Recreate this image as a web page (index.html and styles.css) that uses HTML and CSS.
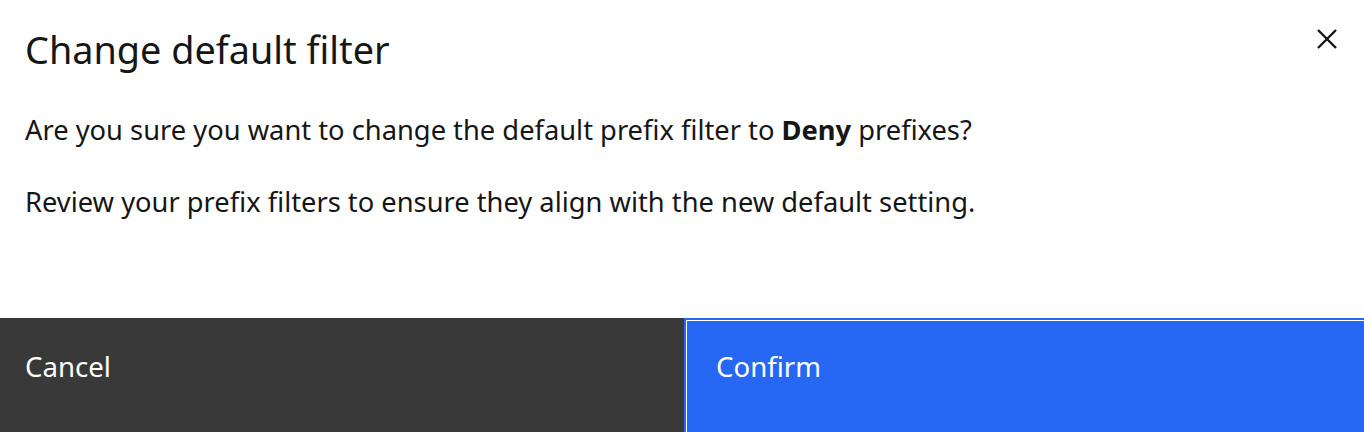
FILE: index.html
```html
<!DOCTYPE html>
<html lang="en">
<head>
    <meta charset="UTF-8">
    <meta name="viewport" content="width=device-width, initial-scale=1.0">
    <title>Change default filter</title>
    <link rel="stylesheet" href="styles.css">
</head>
<body>
    <div class="modal">
        <div class="modal-header">
            <h2 class="modal-title">Change default filter</h2>
            <button class="modal-close" aria-label="Close">
                <svg width="40" height="40" viewBox="0 0 40 40">
                    <path d="M11 11 L29 29 M29 11 L11 29" stroke="#161616" stroke-width="2.4" fill="none"/>
                </svg>
            </button>
        </div>

        <div class="modal-content">
            <p>Are you sure you want to change the default prefix filter to <strong>Deny</strong> prefixes?</p>
            <p>Review your prefix filters to ensure they align with the new default setting.</p>
        </div>

        <div class="modal-footer">
            <button class="btn btn-secondary">Cancel</button>
            <button class="btn btn-primary">Confirm</button>
        </div>
    </div>
</body>
</html>
```

FILE: styles.css
```css
body {
    margin: 0;
    font-family: "Noto Sans", sans-serif;
    color: #161616;
    background: #fff;
    overflow: hidden;
}

.modal {
    height: 432px;
    display: flex;
    flex-direction: column;
}

.modal-header {
    display: flex;
    justify-content: space-between;
    align-items: flex-start;
    padding: 26px 17px 0 25px;
    height: 48px;
}

.modal-title {
    margin: 0;
    font-size: 37.8px;
    font-weight: 400;
    line-height: 48px;
}

.modal-close {
    background: none;
    border: none;
    padding: 0;
    width: 40px;
    height: 40px;
    margin-top: -7px;
}

.modal-content {
    padding: 0 25px;
    margin-top: 38px;
}

.modal-content p {
    margin: 0 0 36px;
    font-size: 27.3px;
    line-height: 36px;
}

.modal-content strong {
    font-weight: 700;
}

.modal-footer {
    margin-top: auto;
    display: grid;
    grid-template-columns: 684px 1fr;
    height: 114px;
}

.btn {
    border: none;
    font-family: inherit;
    font-size: 27.6px;
    line-height: 36px;
    color: #fff;
    text-align: left;
    display: flex;
    align-items: flex-start;
    padding: 30px 25px 0;
}

.btn-secondary {
    background: #393939;
}

.btn-primary {
    background: #2668f3;
    border-top: 2px solid #2668f3;
    border-left: 2px solid #2668f3;
    box-shadow: inset 1px 1px 0 #fff;
    padding-left: 30px;
    padding-top: 28px;
}
```
